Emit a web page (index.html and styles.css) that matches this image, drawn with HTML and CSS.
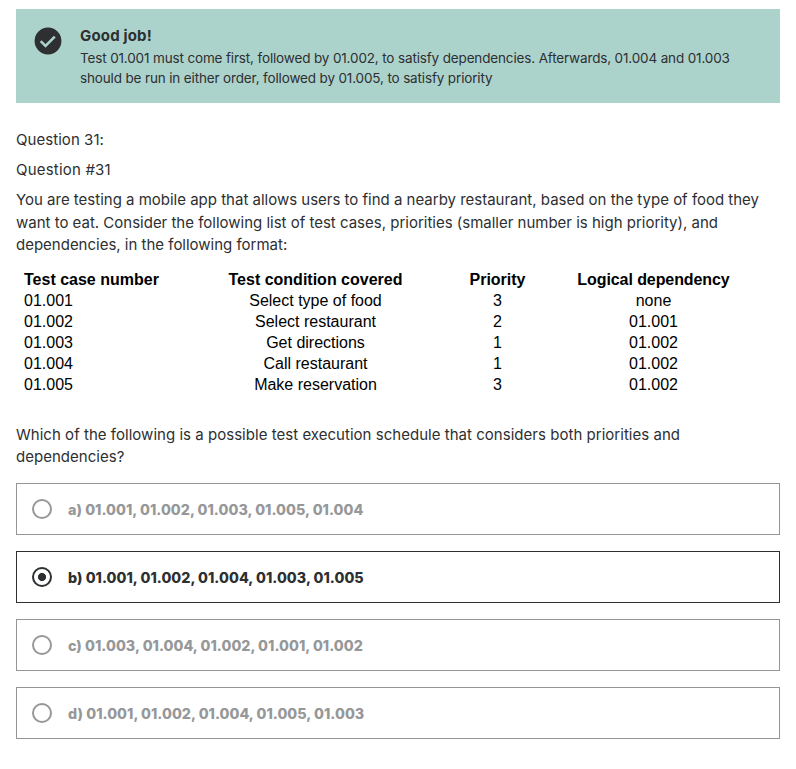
FILE: index.html
```html
<!DOCTYPE html>
<html lang="en">
<head>
<meta charset="utf-8">
<title>Practice test</title>
<link rel="stylesheet" href="styles.css">
</head>
<body>
<main>
<section class="alert">
<svg class="check" viewBox="0 0 28 28"><circle cx="14" cy="14" r="13.4"/><path d="M6.7 14.1l4.8 4.8 9.3-9.3"/></svg>
<div class="alert-text">
<h2>Good job!</h2>
<p>Test 01.001 must come first, followed by 01.002, to satisfy dependencies. Afterwards, 01.004 and 01.003<br>should be run in either order, followed by 01.005, to satisfy priority</p>
</div>
</section>
<section class="question">
<p class="number">Question 31:</p>
<p class="label">Question #31</p>
<p class="scenario">You are testing a mobile app that allows users to find a nearby restaurant, based on the type of food they<br>want to eat. Consider the following list of test cases, priorities (smaller number is high priority), and<br>dependencies, in the following format:</p>
<table>
<colgroup><col class="c1"><col class="c2"><col class="c3"><col class="c4"></colgroup>
<thead><tr><th>Test case number</th><th>Test condition covered</th><th>Priority</th><th>Logical dependency</th></tr></thead>
<tbody>
<tr><td>01.001</td><td>Select type of food</td><td>3</td><td>none</td></tr>
<tr><td>01.002</td><td>Select restaurant</td><td>2</td><td>01.001</td></tr>
<tr><td>01.003</td><td>Get directions</td><td>1</td><td>01.002</td></tr>
<tr><td>01.004</td><td>Call restaurant</td><td>1</td><td>01.002</td></tr>
<tr><td>01.005</td><td>Make reservation</td><td>3</td><td>01.002</td></tr>
</tbody>
</table>
<p class="prompt">Which of the following is a possible test execution schedule that considers both priorities and<br>dependencies?</p>
</section>
<ul class="answers">
<li><i></i><span>a) 01.001, 01.002, 01.003, 01.005, 01.004</span></li>
<li class="selected"><i></i><span>b) 01.001, 01.002, 01.004, 01.003, 01.005</span></li>
<li><i></i><span>c) 01.003, 01.004, 01.002, 01.001, 01.002</span></li>
<li><i></i><span>d) 01.001, 01.002, 01.004, 01.005, 01.003</span></li>
</ul>
</main>
</body>
</html>
```
FILE: styles.css
```css
* { box-sizing: border-box; }
body { margin: 0; background: #fff; color: #2d2f31; font: 15px/22.5px Inter, sans-serif; }
main { padding: 9px 16px 0; }
h2, p, ul { margin: 0; padding: 0; }
p { white-space: nowrap; }

.alert { height: 94px; background: #acd2cc; padding: 16px 16px 0 18px; display: flex; gap: 18px; }
.check { width: 28px; height: 28px; margin-top: 2px; flex: none; }
.check circle { fill: #2d2f31; }
.check path { fill: none; stroke: #acd2cc; stroke-width: 2.5; }
.alert h2 { font-size: 15px; line-height: 22px; font-weight: 700; letter-spacing: 0.17px; }
.alert p { margin-top: 1px; font-size: 13.5px; line-height: 20px; letter-spacing: -0.148px; }

.question { padding-top: 26px; }
.question p { margin-bottom: 7.5px; }
.number { letter-spacing: 0.05px; }
.label { letter-spacing: 0.2px; }
.scenario { letter-spacing: -0.005px; }
.question .prompt { letter-spacing: 0.03px; line-height: 22px; margin-bottom: 0; }

table { width: 764px; margin: 12.5px 0 29px; border-collapse: collapse; table-layout: fixed; font: 16px/21px "Liberation Sans", sans-serif; color: #000; }
th, td { padding: 0; text-align: center; height: 21px; white-space: nowrap; }
th:first-child, td:first-child { text-align: left; padding-left: 8px; }
td:nth-child(4), th:nth-child(4) { padding-right: 40px; }
th:nth-child(4) { letter-spacing: -0.08px; }
.c1 { width: 187px; }
.c2 { width: 225px; }
.c3 { width: 139px; }
.c4 { width: 213px; }

.answers { list-style: none; margin-top: 15px; display: grid; gap: 16px; }
.answers li { height: 52px; border: 1px solid #949596; color: #969798; font-weight: 800; font-size: 14.3px; display: flex; align-items: center; padding-left: 15px; gap: 16px; }
.answers span { padding-top: 2px; letter-spacing: 0.045px; }
.answers i { width: 20px; height: 20px; border: 2px solid #969798; border-radius: 50%; flex: none; }
.answers .selected { border-color: #2d2f31; color: #2d2f31; }
.selected i { border-color: #2d2f31; background: radial-gradient(circle, #2d2f31 3.7px, transparent 4.4px); }
```
